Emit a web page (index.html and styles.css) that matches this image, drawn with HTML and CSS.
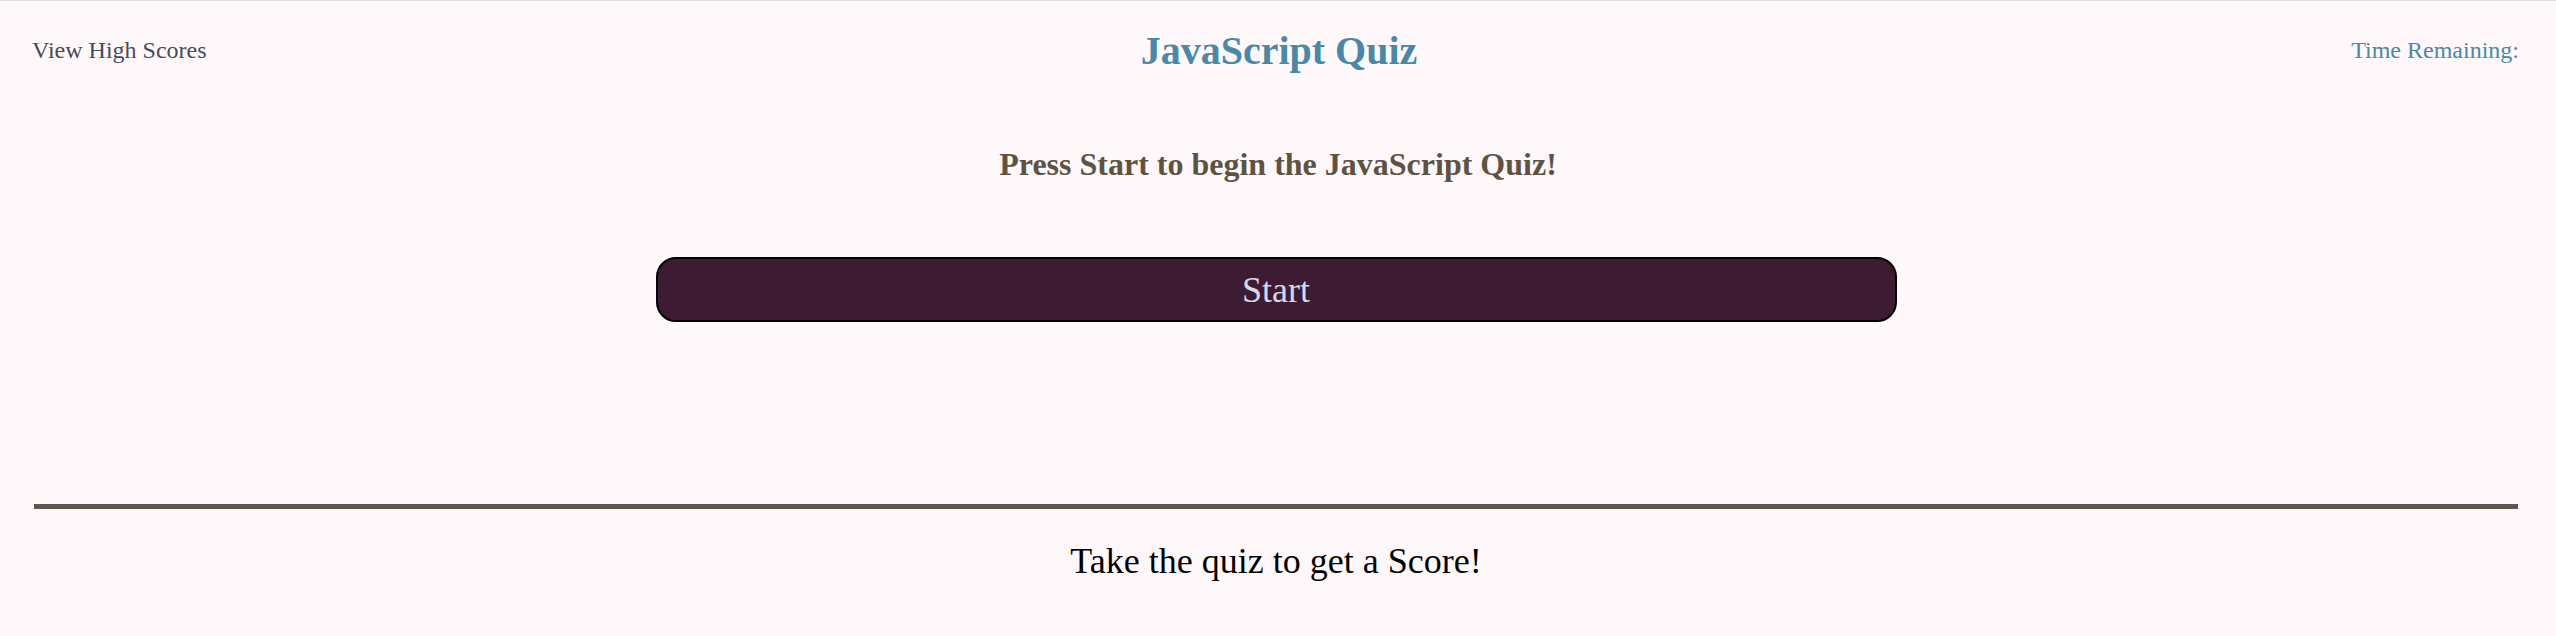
FILE: index.html
```html
<!DOCTYPE html>
<html lang="en">
<head>
<meta charset="utf-8">
<title>JavaScript Quiz</title>
<link rel="stylesheet" href="styles.css">
</head>
<body>
<div class="page">
  <header class="topbar">
    <a class="high-scores">View High Scores</a>
    <h1 class="title">JavaScript Quiz</h1>
    <div class="timer">Time Remaining:</div>
  </header>
  <main class="quiz">
    <p class="prompt">Press Start to begin the JavaScript Quiz!</p>
    <button class="start-btn">Start</button>
  </main>
  <section class="score">
    <hr class="divider">
    <p class="score-text">Take the quiz to get a Score!</p>
  </section>
</div>
</body>
</html>
```
FILE: styles.css
```css
html, body {
  margin: 0;
  padding: 0;
  background: #fff8fa;
  font-family: "Liberation Serif", "Times New Roman", serif;
}

.page {
  border-top: 1px solid #dcdcdc;
  min-height: 635px;
}

.topbar {
  height: 98px;
  display: grid;
  grid-template-columns: 1fr auto 1fr;
  align-items: center;
  padding: 0 37px 0 32px;
}

.high-scores {
  font-size: 24px;
  color: #454c5c;
  justify-self: start;
}

.title {
  margin: 0 0 0 7px;
  font-size: 40px;
  font-weight: bold;
  color: #4a89a5;
}

.timer {
  font-size: 24px;
  color: #4a89a5;
  justify-self: end;
}

.quiz {
  display: flex;
  flex-direction: column;
  align-items: center;
  padding-top: 47px;
}

.prompt {
  margin: 0;
  font-size: 32px;
  font-weight: bold;
  color: #5d5342;
}

.start-btn {
  margin-top: 74px;
  width: 1241px;
  height: 65px;
  border: 2px solid #000;
  border-radius: 20px;
  background: #3d1c33;
  color: #d8d8e8;
  font-family: "Liberation Serif", "Times New Roman", serif;
  font-size: 36px;
  padding: 0;
  transform: translateX(-2px);
}

.score {
  padding: 0 38px 0 34px;
  margin-top: 182px;
}

.divider {
  margin: 0;
  border: 0;
  height: 5px;
  background: #5c5750;
}

.score-text {
  margin: 31px 0 0;
  text-align: center;
  font-size: 36px;
  color: #000;
}
```
